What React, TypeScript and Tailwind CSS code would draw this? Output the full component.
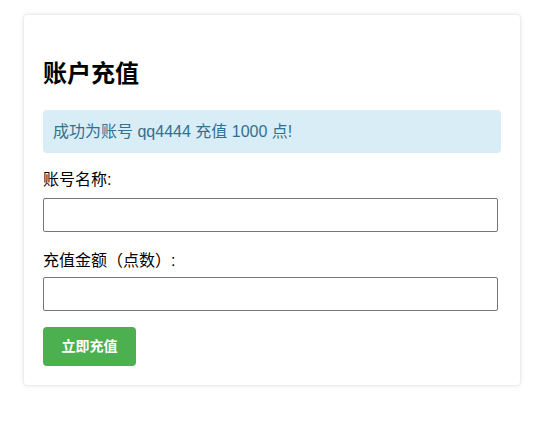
export default function App() {
  return (
    <main
      className="min-h-[424px] bg-white pt-[14px]"
      style={{ fontFamily: '"Liberation Sans", "Noto Sans CJK SC", sans-serif' }}
    >
      <div className="ml-[23px] w-[498px] rounded-[4px] border border-[#ececec] bg-white px-[19px] pb-[19px] pt-[19px] shadow-[0_0_4px_rgba(0,0,0,0.08)]">
        <h2 className="mt-[26px] mb-[22px] text-[24px] font-bold leading-[28px] text-black">账户充值</h2>

        <div className="mb-[15px] rounded-[4px] bg-[#d9edf7] px-[10px] py-[10px] text-[16px] leading-[23px] text-[#31708f]">
          成功为账号 qq4444 充值 1000 点!
        </div>

        <form>
          <label className="mb-[6px] block text-[16px] leading-[24px] text-black">账号名称:</label>
          <input
            type="text"
            className="block h-[34px] w-[455px] rounded-[2px] border border-[#767676] bg-white px-2 text-[16px]"
          />

          <label className="mt-[17px] mb-[4px] block text-[16px] leading-[24px] text-black">充值金额（点数）:</label>
          <input
            type="text"
            className="block h-[34px] w-[455px] rounded-[2px] border border-[#767676] bg-white px-2 text-[16px]"
          />

          <button
            type="button"
            className="mt-[16px] h-[39px] w-[93px] rounded-[4px] bg-[#4caf50] text-[14px] font-semibold text-white"
          >
            立即充值
          </button>
        </form>
      </div>
    </main>
  );
}
